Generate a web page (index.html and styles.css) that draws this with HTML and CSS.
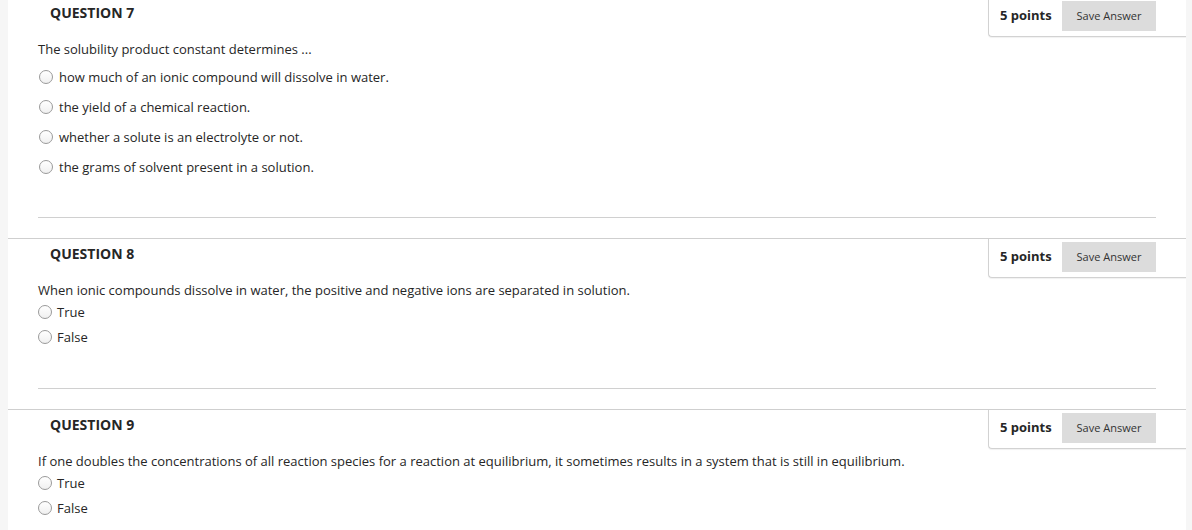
FILE: index.html
```html
<!DOCTYPE html>
<html lang="en">
<head>
<meta charset="utf-8">
<title>Questions</title>
<link rel="stylesheet" href="styles.css">
</head>
<body>
<div class="page">
  <div class="gutter-left"></div>
  <main class="content">
    <section class="question">
      <div class="q-head">
        <h3 class="q-title">QUESTION 7</h3>
        <div class="points-box">
          <span class="points">5 points</span>
          <button class="save-btn" type="button">Save Answer</button>
        </div>
      </div>
      <div class="q-body">
        <p class="q-text">The solubility product constant determines ...</p>
        <ul class="options options-mc">
          <li class="option"><span class="radio"></span>how much of an ionic compound will dissolve in water.</li>
          <li class="option"><span class="radio"></span>the yield of a chemical reaction.</li>
          <li class="option"><span class="radio"></span>whether a solute is an electrolyte or not.</li>
          <li class="option"><span class="radio"></span>the grams of solvent present in a solution.</li>
        </ul>
        <hr class="q-sep">
      </div>
    </section>
    <section class="question">
      <div class="q-head">
        <h3 class="q-title">QUESTION 8</h3>
        <div class="points-box">
          <span class="points">5 points</span>
          <button class="save-btn" type="button">Save Answer</button>
        </div>
      </div>
      <div class="q-body">
        <p class="q-text">When ionic compounds dissolve in water, the positive and negative ions are separated in solution.</p>
        <ul class="options options-tf">
          <li class="option"><span class="radio"></span>True</li>
          <li class="option"><span class="radio"></span>False</li>
        </ul>
        <hr class="q-sep">
      </div>
    </section>
    <section class="question">
      <div class="q-head">
        <h3 class="q-title">QUESTION 9</h3>
        <div class="points-box">
          <span class="points">5 points</span>
          <button class="save-btn" type="button">Save Answer</button>
        </div>
      </div>
      <div class="q-body">
        <p class="q-text">If one doubles the concentrations of all reaction species for a reaction at equilibrium, it sometimes results in a system that is still in equilibrium.</p>
        <ul class="options options-tf">
          <li class="option"><span class="radio"></span>True</li>
          <li class="option"><span class="radio"></span>False</li>
        </ul>
        <hr class="q-sep">
      </div>
    </section>
  </main>
  <div class="gutter-right"></div>
</div>
</body>
</html>
```

FILE: styles.css
```css
* { box-sizing: border-box; }
html, body {
  margin: 0;
  padding: 0;
  background: #f5f5f5;
}
body {
  font-family: "Open Sans", "Liberation Sans", sans-serif;
  font-size: 13px;
  color: #262626;
  overflow: hidden;
}
.page {
  display: flex;
  min-height: 530px;
}
.gutter-left { width: 8px; flex: none; background: #f6f6f6; }
.gutter-right { width: 6px; flex: none; background: #f6f6f6; }
.content {
  flex: 1;
  background: #fff;
  margin-top: -3px;
}
.question {
  border-top: 1px solid #cfcfcf;
}
.q-head {
  display: flex;
  justify-content: space-between;
  align-items: flex-start;
}
.q-title {
  margin: 0;
  padding: 5px 0 0 42px;
  font-size: 14px;
  font-weight: 700;
  line-height: 20px;
  color: #262626;
}
.points-box {
  display: flex;
  align-items: center;
  padding: 3px 30px 5px 11px;
  border-left: 1px solid #d2d2d2;
  border-bottom: 1px solid #d2d2d2;
  border-bottom-left-radius: 4px;
  box-shadow: 0 1px 1px rgba(0,0,0,0.06);
  background: #fff;
}
.points {
  font-weight: 700;
  font-size: 13px;
  line-height: 20px;
  width: 62px;
  margin-top: -2px;
}
.save-btn {
  width: 94px;
  height: 30px;
  border: 0;
  background: #dcdcdc;
  color: #333;
  font-family: "Open Sans", "Liberation Sans", sans-serif;
  font-size: 11px;
  padding: 0 0 1px;
}
.q-body {
  padding: 0 30px;
}
.q-text {
  margin: 2px 0 0;
  line-height: 20px;
}
.options {
  list-style: none;
  margin: 0;
  padding: 0;
}
.option {
  display: flex;
  align-items: center;
  line-height: 20px;
  height: 20px;
}
.options-mc { margin-top: 8px; }
.options-mc .option + .option { margin-top: 10px; }
.options-tf { margin-top: 2px; }
.options-tf .option + .option { margin-top: 5px; }
.radio {
  width: 14px;
  height: 14px;
  border-radius: 50%;
  border: 1px solid #9a9a9a;
  background: linear-gradient(#fff, #f0f0f0);
  margin: 0 6px 0 1px;
  flex: none;
}
.options-tf .radio { margin: 0 5px 0 0; }
.q-sep {
  border: 0;
  border-top: 1px solid #d0d0d0;
  margin: 40px 0 20px;
  height: 0;
}
.options-tf + .q-sep { margin-top: 41px; }
```
